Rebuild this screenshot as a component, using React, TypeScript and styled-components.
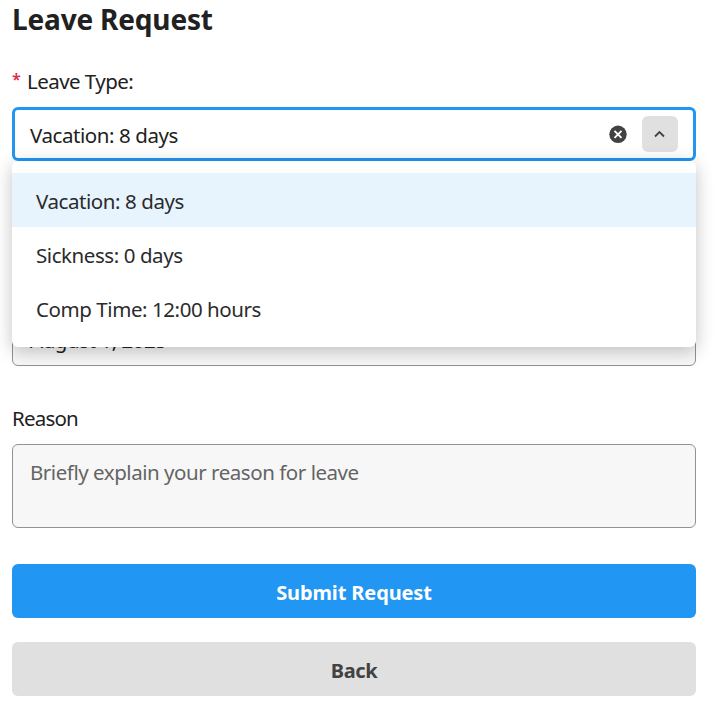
import React from "react";
import styled, { createGlobalStyle } from "styled-components";

const GlobalStyle = createGlobalStyle`
  * { box-sizing: border-box; }
  html, body { margin: 0; background: #fff; }
  body {
    color: #212121;
    font-family: "Segoe UI", "Noto Sans", "Open Sans", sans-serif;
    font-size: 20.5px;
    line-height: 30px;
    overflow: hidden;
  }
`;

const Page = styled.main`
  display: flex;
  flex-direction: column;
  width: 684px;
  height: 706px;
  margin-left: 12px;
`;

const Title = styled.h1`
  margin: 0;
  height: 40px;
  font-size: 28px;
  line-height: 39px;
  font-weight: 700;
  letter-spacing: -0.17px;
`;

const Field = styled.div<{ $gap: number }>`
  display: flex;
  flex-direction: column;
  margin-top: ${(p) => p.$gap}px;
`;

const Label = styled.label<{ $tracking?: number }>`
  display: flex;
  height: 30px;
  margin-bottom: 11px;
  white-space: nowrap;
  letter-spacing: ${(p) => p.$tracking ?? 0}px;
`;

const Required = styled.span`
  width: 15px;
  font-size: 16px;
  font-weight: 600;
  line-height: 27px;
  color: #e0284f;
`;

const SelectAnchor = styled.div`
  position: relative;
`;

const SelectBox = styled.div`
  display: flex;
  align-items: center;
  height: 54px;
  padding: 0 15px;
  border: 3px solid #2196f3;
  border-radius: 6px;
  background: #fff;
`;

const Value = styled.span`
  flex: 1;
  padding-top: 2px;
  letter-spacing: -0.43px;
`;

const ClearIcon = styled.svg`
  width: 18px;
  height: 18px;
  margin-right: 15.5px;
`;

const Toggle = styled.button`
  display: grid;
  place-items: center;
  width: 36px;
  height: 36px;
  padding: 0;
  border: 0;
  border-radius: 6px;
  background: #e0e0e0;
`;

const Menu = styled.ul`
  position: absolute;
  z-index: 2;
  top: 100%;
  left: 0;
  right: 0;
  margin: 0;
  padding: 12px 0;
  list-style: none;
  border-radius: 6px;
  background: #fff;
  box-shadow: 0 4px 18px rgba(0, 0, 0, 0.24);
`;

const Option = styled.li<{ $active?: boolean }>`
  height: 54px;
  padding: 0 24px;
  line-height: 56px;
  letter-spacing: -0.43px;
  color: #2b2b2b;
  background: ${(p) => (p.$active ? "#e7f4fe" : "transparent")};
`;

const InputBox = styled.div<{ $height: number; $muted?: boolean }>`
  height: ${(p) => p.$height}px;
  padding: 12px 17px;
  border: 1px solid #929292;
  border-radius: 6px;
  background: #f7f7f7;
  color: ${(p) => (p.$muted ? "#646464" : "#212121")};
  letter-spacing: -0.46px;
`;

const Button = styled.button<{ $primary?: boolean }>`
  height: 54px;
  flex: none;
  margin-top: ${(p) => (p.$primary ? 36 : 24)}px;
  padding: 3px 0 0;
  border: 0;
  border-radius: 6px;
  font: inherit;
  font-weight: 700;
  font-size: 20px;
  letter-spacing: ${(p) => (p.$primary ? -0.13 : -0.4)}px;
  color: ${(p) => (p.$primary ? "#fff" : "#424242")};
  background: ${(p) => (p.$primary ? "#2196f3" : "#e0e0e0")};
`;

const options = ["Vacation: 8 days", "Sickness: 0 days", "Comp Time: 12:00 hours"];

export default function App() {
  return (
    <>
      <GlobalStyle />
      <Page>
        <Title>Leave Request</Title>
        <Field $gap={26}>
          <Label $tracking={-0.55}>
            <Required>*</Required>Leave Type:
          </Label>
          <SelectAnchor>
            <SelectBox>
              <Value>{options[0]}</Value>
              <ClearIcon viewBox="0 0 18 18">
                <circle cx="9" cy="9.3" r="8.7" fill="#424242" />
                <path d="M5.5 5.8l7 7M12.5 5.8l-7 7" stroke="#fff" strokeWidth="1.9" />
              </ClearIcon>
              <Toggle aria-label="Toggle options">
                <svg width="12" height="8" viewBox="0 0 12 8">
                  <path d="M1 6.5L5.5 2L10 6.5" fill="none" stroke="#424242" strokeWidth="1.8" />
                </svg>
              </Toggle>
            </SelectBox>
            <Menu>
              {options.map((option, i) => (
                <Option key={option} $active={i === 0}>
                  {option}
                </Option>
              ))}
            </Menu>
          </SelectAnchor>
        </Field>
        <Field $gap={151}>
          <InputBox $height={54}>August 1, 2025</InputBox>
        </Field>
        <Field $gap={37}>
          <Label $tracking={-0.8}>Reason</Label>
          <InputBox $height={84} $muted>
            Briefly explain your reason for leave
          </InputBox>
        </Field>
        <Button $primary>Submit Request</Button>
        <Button>Back</Button>
      </Page>
    </>
  );
}
